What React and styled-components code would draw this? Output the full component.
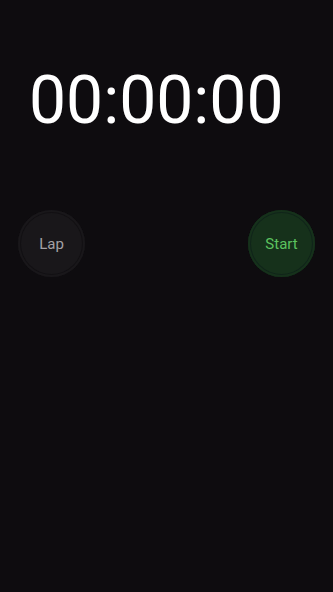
import React from "react";
import styled, { createGlobalStyle } from "styled-components";

const GlobalStyle = createGlobalStyle`
  html, body {
    margin: 0;
    padding: 0;
    background: #0e0c0f;
  }
  body {
    font-family: Roboto, "Noto Sans", sans-serif;
  }
`;

const Screen = styled.div`
  width: 100%;
  min-height: 100vh;
  background: #0e0c0f;
  display: flex;
  flex-direction: column;
  padding: 68px 16px 0;
  box-sizing: border-box;
`;

const Time = styled.div`
  font-size: 66px;
  line-height: 66px;
  font-weight: 400;
  color: #ffffff;
  padding-left: 13px;
`;

const Controls = styled.div`
  display: flex;
  justify-content: space-between;
  align-items: center;
  margin-top: 76px;
  padding: 0 2px;
`;

const RoundButton = styled.button`
  width: 67px;
  height: 67px;
  border-radius: 50%;
  border: none;
  background: ${(p) => (p.$variant === "start" ? "#16311b" : "#19171a")};
  box-shadow: ${(p) =>
    p.$variant === "start"
      ? "inset 0 0 0 2px #16311b, inset 0 0 0 3px #10241a"
      : "inset 0 0 0 2px #19171a, inset 0 0 0 3px #121013"};
  color: ${(p) => (p.$variant === "start" ? "#5cc25f" : "#a3a1a5")};
  font-family: Roboto, "Noto Sans", sans-serif;
  font-size: 15px;
  font-weight: 400;
  display: flex;
  align-items: center;
  justify-content: center;
  padding: 0;
`;

const App = () => {
  return (
    <Screen>
      <GlobalStyle />
      <Time>00:00:00</Time>
      <Controls>
        <RoundButton>Lap</RoundButton>
        <RoundButton $variant="start">Start</RoundButton>
      </Controls>
    </Screen>
  );
};

export default App;
